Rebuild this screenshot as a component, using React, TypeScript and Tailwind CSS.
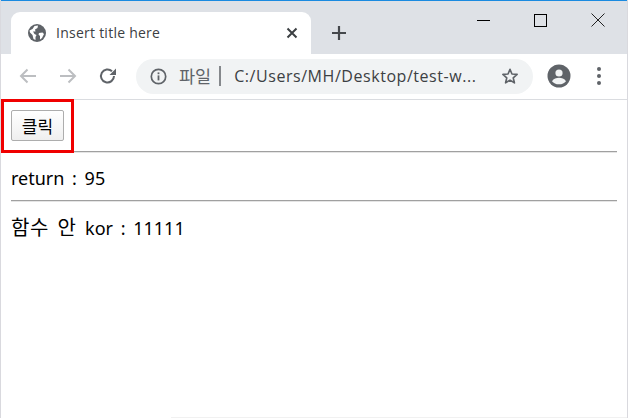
import React from "react";

function Globe() {
  return (
    <svg width="18" height="18" viewBox="0 0 18 18" className="shrink-0">
      <circle cx="9" cy="9" r="9" fill="#5f6368" />
      <path d="M2 6.5 L5 5 L7 2 L10.5 1.5 L10 4 L7.5 5.5 L8 7.5 L5.5 7.5 L7 10 L9 11 L8 13 L8 16 L6 15 L5 11 L2.5 8.5 Z" fill="#fff" transform="translate(-0.5 0)" />
      <path d="M11 9 L14.5 8.5 L16 10 L14 14 L12 15.5 L12 12 L10.5 10.5 Z" fill="#fff" />
    </svg>
  );
}

export default function App() {
  return (
    <div className="relative w-[628px] h-[418px] overflow-hidden bg-white flex flex-col border-x border-x-[#d9d9de] font-['Noto_Sans','Noto_Sans_CJK_KR',sans-serif]">
      {/* title bar */}
      <div className="h-[54px] shrink-0 bg-[#dee1e6] border-t border-t-[#1a8ae0] flex items-end relative">
        <div className="ml-[10px] w-[300px] h-[42px] bg-white rounded-t-[9px] flex items-center pl-[17px] pr-[13px] pb-[1px]">
          <Globe />
          <span className="ml-[10px] text-[14px] text-[#3c4043] font-['Open_Sans','Noto_Sans',sans-serif] tracking-[0.25px] whitespace-nowrap">Insert title here</span>
          <svg width="12" height="12" viewBox="0 0 12 12" className="ml-auto">
            <path d="M1.5 1.5 L10.5 10.5 M10.5 1.5 L1.5 10.5" stroke="#3c4043" strokeWidth="2" />
          </svg>
        </div>
        <svg width="16" height="16" viewBox="0 0 16 16" className="ml-[20px] mb-[13px]">
          <path d="M8 1 V15 M1 8 H15" stroke="#45484c" strokeWidth="2.2" />
        </svg>
        <div className="ml-auto self-start flex items-center h-[38px]">
          <div className="w-[57px] flex justify-center">
            <div className="w-[13px] h-[1px] bg-black" />
          </div>
          <div className="w-[57px] flex justify-center">
            <div className="w-[13px] h-[13px] border border-black" />
          </div>
          <div className="w-[58px] flex justify-center pr-[1px]">
            <svg width="14" height="14" viewBox="0 0 14 14">
              <path d="M0.5 0.5 L13.5 13.5 M13.5 0.5 L0.5 13.5" stroke="#222" strokeWidth="1" />
            </svg>
          </div>
        </div>
      </div>

      {/* toolbar */}
      <div className="h-[46px] shrink-0 bg-white border-b border-b-[#dadce0] flex items-center pb-[1px]">
        <svg width="18" height="16" viewBox="0 0 18 16" className="ml-[18px]">
          <path d="M17 8 H2 M8.5 1.5 L2 8 L8.5 14.5" stroke="#bcbec1" strokeWidth="2" fill="none" />
        </svg>
        <svg width="18" height="16" viewBox="0 0 18 16" className="ml-[22px]">
          <path d="M1 8 H16 M9.5 1.5 L16 8 L9.5 14.5" stroke="#bcbec1" strokeWidth="2" fill="none" />
        </svg>
        <svg width="18" height="18" viewBox="0 0 18 18" className="ml-[22px]">
          <path d="M15 9 A6.5 6.5 0 1 1 13 4.3" stroke="#5f6368" strokeWidth="2" fill="none" />
          <path d="M17 1.5 V8 H10.5 Z" fill="#5f6368" />
        </svg>
        <div className="ml-[19px] w-[397px] h-[35px] rounded-full bg-[#f1f3f4] flex items-center pl-[14px] pr-[14px]">
          <svg width="17" height="17" viewBox="0 0 17 17" className="shrink-0">
            <circle cx="8.5" cy="8.5" r="7.2" stroke="#5f6368" strokeWidth="1.7" fill="none" />
            <rect x="7.6" y="7.4" width="1.8" height="5" fill="#5f6368" />
            <rect x="7.6" y="4.4" width="1.8" height="1.8" fill="#5f6368" />
          </svg>
          <span className="ml-[12px] text-[17.5px] text-[#5f6368] whitespace-nowrap font-['Noto_Sans_CJK_KR',sans-serif]">파일</span>
          <span className="ml-[8px] w-[2px] h-[20px] bg-[#85888c] shrink-0" />
          <span className="ml-[13px] text-[16px] tracking-[0.55px] text-[#3c4043] whitespace-nowrap font-['Open_Sans',sans-serif]">C:/Users/MH/Desktop/test-w...</span>
          <svg width="18" height="18" viewBox="0 0 24 24" className="ml-auto shrink-0">
            <path d="M12 3 L14.6 9.3 L21.5 9.9 L16.3 14.4 L17.9 21.1 L12 17.5 L6.1 21.1 L7.7 14.4 L2.5 9.9 L9.4 9.3 Z" fill="none" stroke="#5f6368" strokeWidth="2.2" strokeLinejoin="round" />
          </svg>
        </div>
        <svg width="24" height="24" viewBox="0 0 24 24" className="ml-[14px]">
          <circle cx="12" cy="12" r="11.5" fill="#5f6368" />
          <circle cx="12" cy="9" r="3.6" fill="#f1f3f4" />
          <path d="M5 17.2 C6.5 14.5 9.5 13.8 12 13.8 C14.5 13.8 17.5 14.5 19 17.2 C17.5 19.2 15 20.3 12 20.3 C9 20.3 6.5 19.2 5 17.2 Z" fill="#f1f3f4" />
        </svg>
        <div className="ml-[26px] flex flex-col gap-[3px]">
          <div className="w-[4px] h-[4px] rounded-full bg-[#5f6368]" />
          <div className="w-[4px] h-[4px] rounded-full bg-[#5f6368]" />
          <div className="w-[4px] h-[4px] rounded-full bg-[#5f6368]" />
        </div>
      </div>

      {/* page */}
      <div className="flex-1 pl-[10px] pr-[10px] pt-[10px] text-black">
        <button className="block w-[53px] h-[31px] border border-[#adadad] rounded-[2px] bg-gradient-to-b from-[#ffffff] to-[#efefef] text-[17px] leading-none text-black font-['Noto_Sans_CJK_KR',sans-serif]">클릭</button>
        <div className="mt-[10px] h-[2px] bg-[#a0a0a0] border-b border-b-[#e5e5e5]" />
        <div className="mt-[12px] h-[26px] leading-[26px] text-[18px] [word-spacing:3px] font-['Noto_Sans',sans-serif] whitespace-nowrap">return : 95</div>
        <div className="mt-[9px] h-[2px] bg-[#a0a0a0] border-b border-b-[#e5e5e5]" />
        <div className="mt-[12px] h-[28px] leading-[28px] text-[20px] tracking-[0.5px] whitespace-nowrap [word-spacing:3px] font-['Noto_Sans','Noto_Sans_CJK_KR',sans-serif]">함수 안 <span className="text-[18px] tracking-normal [word-spacing:3px]">kor : 11111</span></div>
      </div>

      {/* annotation box drawn over the page */}
      <div className="absolute left-[0px] top-[99px] w-[73px] h-[54px] border-[3px] border-[#f00000]" />
      <div className="absolute left-[170px] bottom-0 right-[0px] h-[1px] bg-[#f1f1f1]" />
    </div>
  );
}
